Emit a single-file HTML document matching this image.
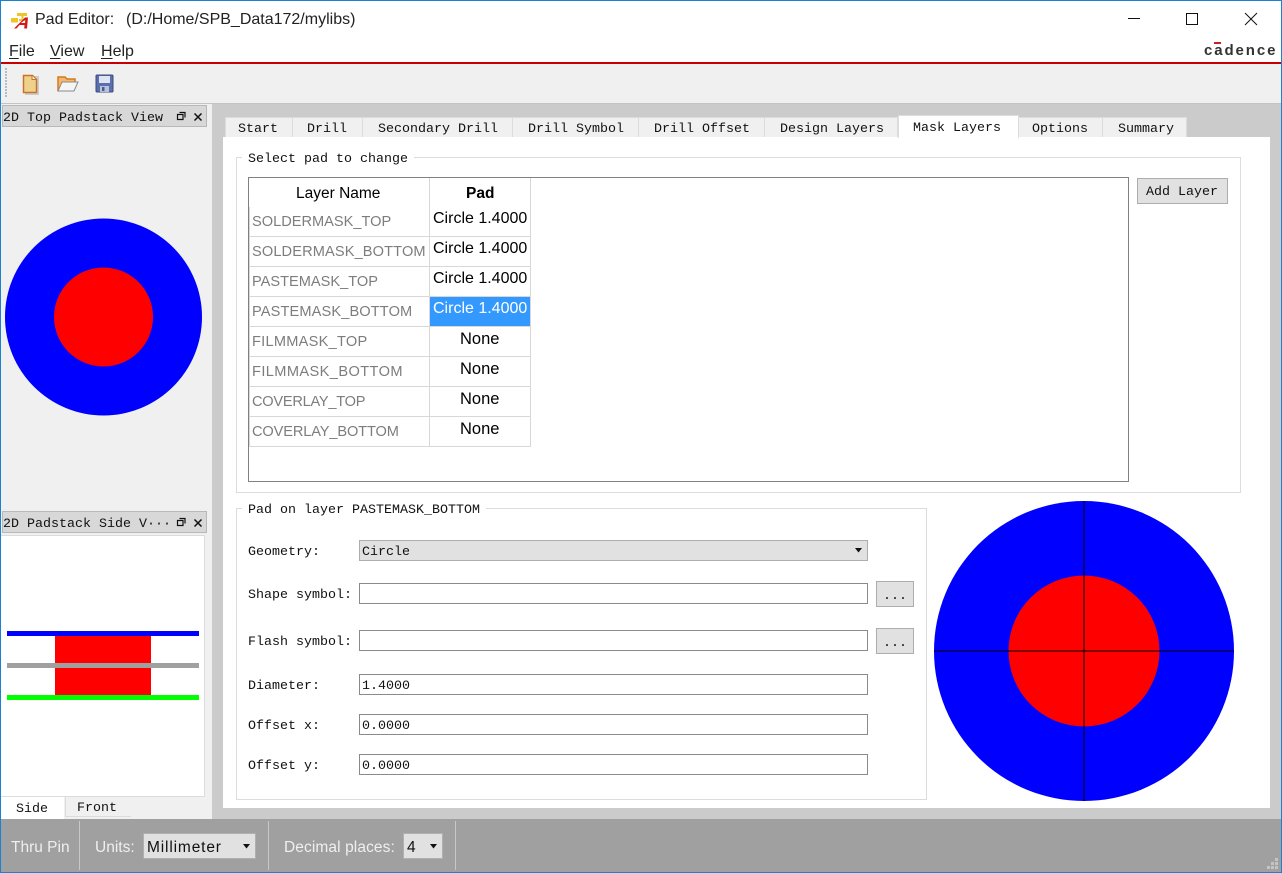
<!DOCTYPE html>
<html><head><meta charset="utf-8"><title>Pad Editor</title>
<style>
html,body{margin:0;padding:0;background:#fff}
#w{position:relative;width:1282px;height:873px;overflow:hidden;background:#f0f0f0;font-family:"Liberation Sans",sans-serif;color:#000}
#w div,#w span.a,#w svg{position:absolute}
.s{white-space:nowrap;font-size:15px;line-height:20px;height:20px;margin-top:1px}
.m{white-space:nowrap;font-family:"Liberation Mono",monospace;font-size:13.33px;line-height:16px;height:16px;color:#111;margin-top:2px}
.tab{top:117px;height:20px;background:#f0f0f0;border:1px solid #dcdcdc;border-bottom:none;box-sizing:border-box}
#w .gl{color:#7d7d7d;font-size:14.6px;margin-top:0}
#w .st{margin-top:2px;font-size:15.5px}
.ln{background:#d8d8d8}
.inp{left:359px;width:509px;height:21px;background:#fff;border:1px solid #8a8a8a;box-sizing:border-box}
.btn{left:876px;width:38px;height:26px;background:#e1e1e1;border:1px solid #adadad;box-sizing:border-box}
u{text-decoration:underline;text-underline-offset:2px}
</style></head><body><div id="w">
<!-- title bar -->
<div style="left:0;top:0;width:1282px;height:62px;background:#fff"></div>
<svg style="left:10px;top:8px" width="22" height="21" viewBox="0 0 22 21">
<path d="M7 5h10v3h-3.500v3H17v2H9v-2h2.500V8H7z" fill="#eec426"/><path d="M1 10h7v4.500H1z" fill="#eec426"/>
<path d="M4 20.500L15 9.500h3l-1 11h-2.800l.3-3.500H9.500l-3 3.500zM11 15h4l.4-3.500z" fill="#d4181c"/>
</svg>
<div class="s" style="left:35px;top:9px;font-size:16px;color:#222">Pad Editor:</div>
<div class="s" style="left:126px;top:9px;font-size:16px;color:#222">(D:/Home/SPB_Data172/mylibs)</div>
<svg style="left:1120px;top:7px" width="150" height="24" viewBox="0 0 150 24" fill="none" stroke="#111" stroke-width="1">
<path d="M8 11.500H20"/><path d="M66.500 6.500h11v11h-11z"/><path d="M125 6l12 12M137 6l-12 12"/>
</svg>
<div class="s" style="left:9px;top:41px;font-size:16px;color:#222"><u>F</u>ile</div>
<div class="s" style="left:50px;top:41px;font-size:16px;color:#222"><u>V</u>iew</div>
<div class="s" style="left:101px;top:41px;font-size:16px;color:#222"><u>H</u>elp</div>
<div class="s" style="left:1204px;top:40px;font-size:15px;font-weight:bold;letter-spacing:1.900px;color:#333;width:78px">cadence</div>
<div style="left:1214px;top:42px;width:7px;height:2px;background:#c8202a"></div>
<div style="left:1px;top:62px;width:1280px;height:2px;background:#c80000"></div>
<!-- toolbar -->
<div style="left:1px;top:64px;width:1280px;height:39px;background:#f0f0f0"></div>
<div style="left:5px;top:68px;width:2px;height:30px;background:repeating-linear-gradient(#bbb 0 2px,transparent 2px 3px)"></div>
<svg style="left:20px;top:73px" width="20" height="22" viewBox="0 0 20 22">
<rect x="5" y="3" width="14" height="19" fill="#ccc"/>
<path d="M3.500 2.500h9l4 4v13h-13z" fill="#eed28c" stroke="#c9722a" stroke-width="1.500"/>
<path d="M12 2.500v4h4" fill="#fff3d0" stroke="#c9722a"/>
</svg>
<svg style="left:56px;top:73px" width="24" height="22" viewBox="0 0 24 22">
<path d="M2 18V4h7l2 2h8v4" fill="#f6b868" stroke="#d07a20" stroke-width="1.500"/>
<path d="M2 18l4-9h16l-4 9z" fill="#f5f5f5" stroke="#8a8a8a"/>
</svg>
<svg style="left:95px;top:74px" width="20" height="20" viewBox="0 0 20 20">
<rect x="1" y="1" width="17" height="17" rx="1" fill="#5a6fae" stroke="#3c4a7c"/>
<rect x="4" y="2" width="11" height="7" fill="#dfe4f2"/>
<rect x="5" y="12" width="9" height="6" fill="#b9c1d8"/><rect x="7" y="13" width="2.500" height="4" fill="#4a5a90"/>
</svg>
<div style="left:1px;top:103px;width:1280px;height:1px;background:#c4c4c4"></div>
<!-- main -->
<div style="left:212px;top:104px;width:1069px;height:715px;background:#cbcbcb"></div>
<div style="left:223px;top:137px;width:1047px;height:671px;background:#fff"></div>
<!-- tabs -->
<div class="tab" style="left:225px;width:68px"></div><div class="m" style="left:238px;top:120px">Start</div>
<div class="tab" style="left:292px;width:71px"></div><div class="m" style="left:307px;top:120px">Drill</div>
<div class="tab" style="left:362px;width:151px"></div><div class="m" style="left:378px;top:120px">Secondary Drill</div>
<div class="tab" style="left:512px;width:127px"></div><div class="m" style="left:528px;top:120px">Drill Symbol</div>
<div class="tab" style="left:638px;width:127px"></div><div class="m" style="left:654px;top:120px">Drill Offset</div>
<div class="tab" style="left:764px;width:134px"></div><div class="m" style="left:780px;top:120px">Design Layers</div>
<div class="tab" style="left:898px;top:115px;width:121px;height:23px;background:#fff;border-color:#dcdcdc"></div><div class="m" style="left:913px;top:119px">Mask Layers</div>
<div class="tab" style="left:1018px;width:85px"></div><div class="m" style="left:1032px;top:120px">Options</div>
<div class="tab" style="left:1102px;width:85px"></div><div class="m" style="left:1118px;top:120px">Summary</div>
<!-- group select -->
<div style="left:236px;top:157px;width:1005px;height:336px;border:1px solid #dcdcdc;box-sizing:border-box"></div>
<div class="m" style="left:242px;top:150px;background:#fff;padding:0 6px">Select pad to change</div>
<div style="left:248px;top:177px;width:881px;height:305px;border:1px solid #808080;box-sizing:border-box;background:#fff"></div>
<div class="ln" style="left:429px;top:178px;width:1px;height:268px"></div>
<div class="ln" style="left:530px;top:178px;width:1px;height:268px"></div>
<div class="ln" style="left:249px;top:207px;width:1px;height:239px"></div>
<div class="ln" style="left:249px;top:236px;width:282px;height:1px"></div>
<div class="ln" style="left:249px;top:266px;width:282px;height:1px"></div>
<div class="ln" style="left:249px;top:296px;width:282px;height:1px"></div>
<div class="ln" style="left:249px;top:326px;width:282px;height:1px"></div>
<div class="ln" style="left:249px;top:356px;width:282px;height:1px"></div>
<div class="ln" style="left:249px;top:386px;width:282px;height:1px"></div>
<div class="ln" style="left:249px;top:416px;width:282px;height:1px"></div>
<div class="ln" style="left:249px;top:446px;width:282px;height:1px"></div>
<div style="left:430px;top:297px;width:100px;height:29px;background:#3399ff"></div>
<div class="s" style="left:296px;top:183px;font-size:15.500px">Layer Name</div>
<div class="s" style="left:466px;top:183px;font-size:15.500px;font-weight:bold">Pad</div>
<div class="s gl" style="left:252px;top:212px">SOLDERMASK_TOP</div>
<div class="s gl" style="left:252px;top:242px;letter-spacing:.12px">SOLDERMASK_BOTTOM</div>
<div class="s gl" style="left:252px;top:272px">PASTEMASK_TOP</div>
<div class="s gl" style="left:252px;top:302px;letter-spacing:.12px">PASTEMASK_BOTTOM</div>
<div class="s gl" style="left:252px;top:332px;letter-spacing:.25px">FILMMASK_TOP</div>
<div class="s gl" style="left:252px;top:362px;letter-spacing:.4px">FILMMASK_BOTTOM</div>
<div class="s gl" style="left:252px;top:392px;letter-spacing:-.25px">COVERLAY_TOP</div>
<div class="s gl" style="left:252px;top:422px;letter-spacing:-.13px">COVERLAY_BOTTOM</div>
<div class="s" style="left:433px;top:208px;font-size:16px">Circle 1.4000</div>
<div class="s" style="left:433px;top:238px;font-size:16px">Circle 1.4000</div>
<div class="s" style="left:433px;top:268px;font-size:16px">Circle 1.4000</div>
<div class="s" style="left:433px;top:298px;font-size:16px;color:#fff">Circle 1.4000</div>
<div class="s" style="left:460px;top:328px;font-size:16.500px">None</div>
<div class="s" style="left:460px;top:358px;font-size:16.500px">None</div>
<div class="s" style="left:460px;top:388px;font-size:16.500px">None</div>
<div class="s" style="left:460px;top:418px;font-size:16.500px">None</div>
<div style="left:1137px;top:178px;width:91px;height:26px;background:#e1e1e1;border:1px solid #adadad;box-sizing:border-box"></div>
<div class="m" style="left:1146px;top:183px">Add Layer</div>
<!-- pad group -->
<div style="left:236px;top:508px;width:691px;height:292px;border:1px solid #dcdcdc;box-sizing:border-box"></div>
<div class="m" style="left:242px;top:501px;background:#fff;padding:0 6px">Pad on layer PASTEMASK_BOTTOM</div>
<div class="m" style="left:248px;top:543px">Geometry:</div>
<div class="m" style="left:248px;top:586px">Shape symbol:</div>
<div class="m" style="left:248px;top:633px">Flash symbol:</div>
<div class="m" style="left:248px;top:677px">Diameter:</div>
<div class="m" style="left:248px;top:717px">Offset x:</div>
<div class="m" style="left:248px;top:757px">Offset y:</div>
<div class="inp" style="top:540px;background:#e1e1e1;border-color:#adadad"></div>
<div class="m" style="left:362px;top:543px">Circle</div>
<svg style="left:855px;top:548px" width="7" height="5"><path d="M0 0h7L3.500 4.500z" fill="#111"/></svg>
<div class="inp" style="top:583px"></div>
<div class="inp" style="top:630px"></div>
<div class="inp" style="top:674px"></div><div class="m" style="left:362px;top:677px">1.4000</div>
<div class="inp" style="top:714px"></div><div class="m" style="left:362px;top:717px">0.0000</div>
<div class="inp" style="top:754px"></div><div class="m" style="left:362px;top:757px">0.0000</div>
<div class="btn" style="top:581px"></div><div class="m" style="left:883px;top:587px">...</div>
<div class="btn" style="top:628px"></div><div class="m" style="left:883px;top:634px">...</div>
<!-- big preview -->
<svg style="left:930px;top:497px" width="310" height="310" viewBox="0 0 310 310">
<circle cx="154" cy="154" r="150" fill="#00f"/>
<circle cx="154" cy="154" r="75.500" fill="#f00"/>
<path d="M4 154H304M154 4V304" stroke="#000" stroke-width="1"/>
</svg>
<!-- left dock -->
<div style="left:2px;top:105px;width:205px;height:22px;background:#d8d8d8;border:1px solid #b8b8b8;box-sizing:border-box"></div>
<div class="m" style="left:3px;top:109px">2D Top Padstack View</div>
<svg style="left:175px;top:110px" width="28" height="13" fill="none" stroke="#111">
<path d="M4.500 2.500h5.500v5M2.500 4.500h5.500v5h-5.500z" stroke-width="1.200"/><path d="M19.500 3.500l7 7M26.500 3.500l-7 7" stroke-width="1.500"/>
</svg>
<svg style="left:1px;top:210px" width="210" height="215">
<circle cx="102.500" cy="107" r="98.500" fill="#00f"/><circle cx="102.500" cy="107" r="49.500" fill="#f00"/>
</svg>
<div style="left:2px;top:511px;width:205px;height:22px;background:#d8d8d8;border:1px solid #b8b8b8;box-sizing:border-box"></div>
<div class="m" style="left:3px;top:515px">2D Padstack Side V···</div>
<svg style="left:175px;top:516px" width="28" height="13" fill="none" stroke="#111">
<path d="M4.500 2.500h5.500v5M2.500 4.500h5.500v5h-5.500z" stroke-width="1.200"/><path d="M19.500 3.500l7 7M26.500 3.500l-7 7" stroke-width="1.500"/>
</svg>
<div style="left:1px;top:535px;width:204px;height:262px;background:#fff;border:1px solid #dcdcdc;border-left:none;box-sizing:border-box"></div>
<div style="left:55px;top:635px;width:96px;height:60px;background:#f00"></div>
<div style="left:7px;top:631px;width:192px;height:5px;background:#00f"></div>
<div style="left:7px;top:663px;width:192px;height:5px;background:#a0a0a0"></div>
<div style="left:7px;top:695px;width:192px;height:5px;background:#0f0"></div>
<div style="left:1px;top:797px;width:63px;height:22px;background:#fff"></div>
<div class="m" style="left:16px;top:801px;margin-top:1px">Side</div>
<div style="left:65px;top:797px;width:66px;height:20px;background:#f0f0f0;border-left:1px solid #dcdcdc;border-bottom:1px solid #dcdcdc;box-sizing:border-box"></div>
<div class="m" style="left:77px;top:800px;margin-top:1px">Front</div>
<!-- status bar -->
<div style="left:1px;top:819px;width:1280px;height:53px;background:#a0a0a0"></div>
<div style="left:79px;top:821px;width:1px;height:49px;background:#c8c8c8"></div>
<div style="left:268px;top:821px;width:1px;height:49px;background:#c8c8c8"></div>
<div style="left:455px;top:821px;width:1px;height:49px;background:#c8c8c8"></div>
<div class="s st" style="left:11px;top:836px;color:#efefef">Thru Pin</div>
<div class="s st" style="left:95px;top:836px;color:#efefef">Units:</div>
<div style="left:143px;top:833px;width:113px;height:26px;background:#e1e1e1;border:1px solid #b0b0b0;box-sizing:border-box"></div>
<div class="s st" style="left:147px;top:836px;color:#111;letter-spacing:.85px">Millimeter</div>
<svg style="left:243px;top:844px" width="7" height="5"><path d="M0 0h7L3.500 4.500z" fill="#111"/></svg>
<div class="s st" style="left:284px;top:836px;color:#efefef;letter-spacing:.1px">Decimal places:</div>
<div style="left:403px;top:833px;width:40px;height:26px;background:#e1e1e1;border:1px solid #b0b0b0;box-sizing:border-box"></div>
<div class="s st" style="left:407px;top:836px;color:#111">4</div>
<svg style="left:430px;top:844px" width="7" height="5"><path d="M0 0h7L3.500 4.500z" fill="#111"/></svg>
<svg style="left:1267px;top:858px" width="12" height="12" fill="#c4c4c4">
<rect x="8" y="0" width="3" height="3"/><rect x="4" y="4" width="3" height="3"/><rect x="8" y="4" width="3" height="3"/><rect x="0" y="8" width="3" height="3"/><rect x="4" y="8" width="3" height="3"/><rect x="8" y="8" width="3" height="3"/>
</svg>
<!-- window border -->
<div style="left:0;top:0;width:1282px;height:1px;background:#1b82d2"></div>
<div style="left:0;top:872px;width:1282px;height:1px;background:#1b82d2"></div>
<div style="left:0;top:0;width:1px;height:873px;background:#1b82d2"></div>
<div style="left:1281px;top:0;width:1px;height:873px;background:#1b82d2"></div>
</div></body></html>
